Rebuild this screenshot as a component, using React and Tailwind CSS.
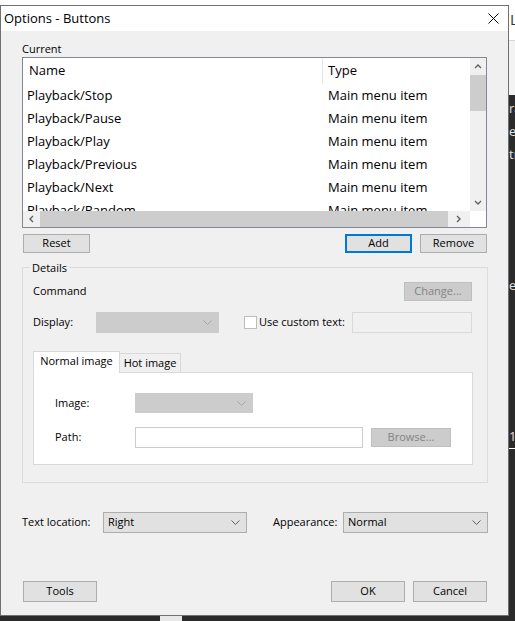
import React from "react";

const rows = ["Stop", "Pause", "Play", "Previous", "Next", "Random"];

const Arrow = ({ dir }) => {
  const pts = {
    up: "1,5 4,2 7,5",
    down: "1,2 4,5 7,2",
    left: "5,1 2,4 5,7",
    right: "2,1 5,4 2,7",
  };
  return (
    <svg width="8" height="8" viewBox="0 0 8 8">
      <polyline points={pts[dir]} fill="none" stroke="#606060" strokeWidth="1.4" />
    </svg>
  );
};

const ComboArrow = ({ color = "#606060" }) => (
  <svg width="9" height="5" viewBox="0 0 9 5">
    <polyline points="0.5,0.5 4.5,4.5 8.5,0.5" fill="none" stroke={color} strokeWidth="1" />
  </svg>
);

const ListBox = () => (
  <div className="mt-px grid h-[171px] w-[465px] grid-cols-[1fr_16px] grid-rows-[1fr_16px] border border-[#828790] bg-white">
    {/* list content */}
    <div className="overflow-hidden text-[13px] text-black">
      <div className="flex h-[26px] items-center">
        <div className="w-[299px] pl-[6px]">Name</div>
        <div className="flex h-full items-center border-l border-[#e5e5e5] pl-[5px]">Type</div>
      </div>
      {rows.map((r) => (
        <div key={r} className="flex h-[23px] items-center">
          <div className="w-[299px] pl-[4px]">Playback/{r}</div>
          <div className="pl-[6px]">Main menu item</div>
        </div>
      ))}
    </div>
    {/* vertical scrollbar */}
    <div className="flex flex-col bg-[#f0f0f0]">
      <div className="flex h-[17px] items-center justify-center">
        <Arrow dir="up" />
      </div>
      <div className="h-[36px] bg-[#cdcdcd]" />
      <div className="flex-1" />
      <div className="flex h-[17px] items-center justify-center">
        <Arrow dir="down" />
      </div>
    </div>
    {/* horizontal scrollbar */}
    <div className="flex bg-[#f0f0f0]">
      <div className="flex w-[17px] items-center justify-center">
        <Arrow dir="left" />
      </div>
      <div className="w-[408px] bg-[#cdcdcd]" />
      <div className="flex flex-1 items-center justify-center">
        <Arrow dir="right" />
      </div>
    </div>
    <div className="bg-white" />
  </div>
);

const Button = ({ children, className = "" }) => (
  <div
    className={`flex items-center justify-center border border-[#adadad] bg-[#e1e1e1] text-[11px] text-black ${className}`}
  >
    {children}
  </div>
);

const DisabledButton = ({ children, className = "" }) => (
  <div
    className={`flex items-center justify-center border border-[#bfbfbf] bg-[#cccccc] text-[11px] text-[#838383] ${className}`}
  >
    {children}
  </div>
);

const Combo = ({ value, className = "" }) => (
  <div
    className={`flex items-center justify-between border border-[#adadad] bg-[#e1e1e1] pl-[4px] pr-[6px] text-[11px] text-black ${className}`}
  >
    <span>{value}</span>
    <ComboArrow />
  </div>
);

const DisabledCombo = ({ className = "" }) => (
  <div className={`flex items-center justify-end border border-[#cccccc] bg-[#cccccc] pr-[6px] ${className}`}>
    <ComboArrow color="#a6a6a6" />
  </div>
);

const Details = () => (
  <div className="relative mt-[14px] h-[216px] w-[466px] border border-[#dcdcdc] pl-[10px] pr-[15px] pt-[14px] text-[11px] text-black">
    <span className="absolute -top-[8px] left-[7px] bg-[#f0f0f0] px-[2px] leading-[15px]">Details</span>

    <div className="flex h-[19px] items-center justify-between">
      <span>Command</span>
      <DisabledButton className="h-[19px] w-[68px]">Change...</DisabledButton>
    </div>

    <div className="mt-[11px] flex h-[21px] items-center">
      <span className="w-[63px]">Display:</span>
      <DisabledCombo className="h-[21px] w-[123px]" />
      <div className="ml-[25px] h-[13px] w-[13px] border border-[#bcbcbc] bg-white" />
      <span className="ml-[2px] text-[#000000]">Use custom text:</span>
      <div className="ml-auto h-[21px] w-[120px] border border-[#d9d9d9] bg-[#f0f0f0]" />
    </div>

    <div className="mt-[18px]">
      <div className="relative z-10 -mb-px flex h-[22px] items-end">
        <div className="flex h-[22px] w-[87px] items-center justify-center border-l border-r border-t border-[#d9d9d9] bg-white pb-[2px]">
          Normal image
        </div>
        <div className="mb-px flex h-[19px] w-[61px] items-center justify-center border-r border-t border-[#d9d9d9] bg-[#f0f0f0]">
          Hot image
        </div>
      </div>
      <div className="h-[93px] w-[440px] border border-[#d9d9d9] bg-white pl-[21px] pt-[20px]">
        <div className="flex h-[20px] items-center">
          <span className="w-[80px]">Image:</span>
          <DisabledCombo className="h-[20px] w-[118px]" />
        </div>
        <div className="mt-[14px] flex h-[21px] items-center">
          <span className="w-[80px]">Path:</span>
          <div className="h-[21px] w-[228px] border border-[#cccccc] bg-white" />
          <DisabledButton className="ml-[8px] h-[19px] w-[80px]">Browse...</DisabledButton>
        </div>
      </div>
    </div>
  </div>
);

export default function App() {
  return (
    <div className="relative h-[621px] w-[515px] overflow-hidden bg-[#2b2b2b] font-['Open_Sans',sans-serif]">
      {/* desktop behind the dialog */}
      <div className="flex h-full flex-col">
        <div className="h-[40px] bg-white pl-[510px] pt-[9px] text-[15px] leading-[20px] text-[#333]">L</div>
        <div className="h-[55px] border-t border-[#d6d6d6] bg-[#f3f3f3]" />
        <div className="flex flex-1 flex-col pl-[509px] text-[13px] leading-[23px] text-[#e0e0e0]">
          <span className="mt-[2px]">ra</span>
          <span>e</span>
          <span>tr</span>
          <span className="mt-[108px]">e</span>
          <span className="mt-[128px]">1</span>
          <div className="h-px w-[6px] bg-white" />
          <div className="mt-auto flex h-[5px] -ml-[509px]">
            <div className="ml-[160px] w-[22px] bg-[#e8e8e8]" />
          </div>
        </div>
      </div>

      {/* dialog window */}
      <div className="absolute left-0 top-[5px] flex h-[611px] w-[509px] flex-col border border-[#707070] bg-[#f0f0f0]">
        <div className="flex h-[25px] items-center justify-between bg-white pl-[3px] pr-[9px]">
          <span className="text-[13px] text-black">Options - Buttons</span>
          <svg width="11" height="11" viewBox="0 0 11 11">
            <path d="M0.5 0.5 L10.5 10.5 M10.5 0.5 L0.5 10.5" stroke="#000" strokeWidth="1" />
          </svg>
        </div>

        <div className="flex flex-col pl-[21px] pt-[10px]">
          <span className="text-[11px] leading-[15px] text-black">Current</span>
          <ListBox />

          <div className="mt-[6px] flex h-[19px] w-[465px]">
            <Button className="ml-px h-[19px] w-[67px]">Reset</Button>
            <div className="ml-auto flex gap-[8px]">
              <div className="flex h-[19px] w-[67px] items-center justify-center border-2 border-[#0078d7] bg-[#e1e1e1] text-[11px] text-black">
                Add
              </div>
              <Button className="h-[19px] w-[67px]">Remove</Button>
            </div>
          </div>

          <Details />

          <div className="mt-[29px] flex h-[21px] items-center text-[11px] text-black">
            <span className="w-[81px]">Text location:</span>
            <Combo value="Right" className="h-[21px] w-[144px]" />
            <span className="ml-[26px] w-[70px]">Appearance:</span>
            <Combo value="Normal" className="h-[21px] w-[145px]" />
          </div>

          <div className="mt-[48px] flex h-[21px] w-[465px]">
            <Button className="ml-px h-[21px] w-[74px]">Tools</Button>
            <div className="ml-auto flex gap-[8px]">
              <Button className="h-[21px] w-[74px]">OK</Button>
              <Button className="h-[21px] w-[74px]">Cancel</Button>
            </div>
          </div>
        </div>
      </div>
    </div>
  );
}
